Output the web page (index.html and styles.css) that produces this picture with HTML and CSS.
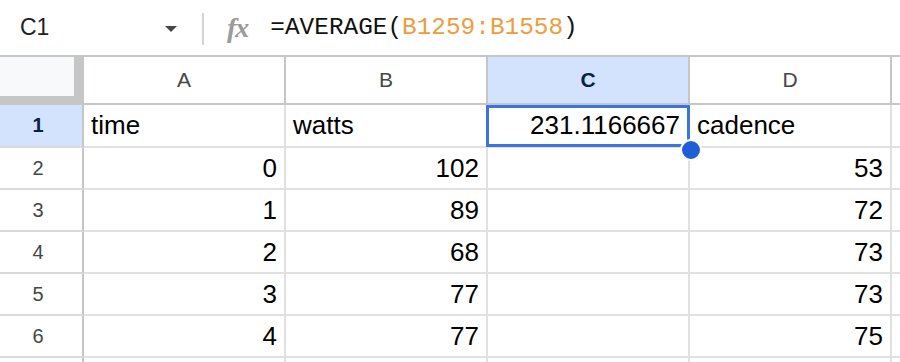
FILE: index.html
```html
<!DOCTYPE html>
<html lang="en">

<head>
    <meta charset="UTF-8">
    <meta name="viewport" content="width=device-width, initial-scale=1.0">
    <title>Sheet</title>

    <link rel="stylesheet" href="styles.css">
</head>

<body>
    <div id="toolbar">
        <span class="namebox">C1</span>
        <span class="drop"></span>
        <span class="divider"></span>
        <span class="fx">fx</span>
        <span class="formula">=AVERAGE(<span class="ref">B1259:B1558</span>)</span>
    </div>

    <div id="sheet">
        <!-- header row -->
        <div class="corner"><div class="corner_inner"></div></div>
        <div class="colhead">A</div>
        <div class="colhead">B</div>
        <div class="colhead active">C</div>
        <div class="colhead">D</div>
        <div class="colhead last"></div>

        <!-- row 1 -->
        <div class="rowhead active r1">1</div>
        <div class="cell r1">time</div>
        <div class="cell r1">watts</div>
        <div class="cell r1 num selected">231.1166667</div>
        <div class="cell r1">cadence</div>
        <div class="cell r1 last"></div>

        <div class="rowhead">2</div>
        <div class="cell num">0</div>
        <div class="cell num">102</div>
        <div class="cell"></div>
        <div class="cell num">53</div>
        <div class="cell last"></div>

        <div class="rowhead">3</div>
        <div class="cell num">1</div>
        <div class="cell num">89</div>
        <div class="cell"></div>
        <div class="cell num">72</div>
        <div class="cell last"></div>

        <div class="rowhead">4</div>
        <div class="cell num">2</div>
        <div class="cell num">68</div>
        <div class="cell"></div>
        <div class="cell num">73</div>
        <div class="cell last"></div>

        <div class="rowhead">5</div>
        <div class="cell num">3</div>
        <div class="cell num">77</div>
        <div class="cell"></div>
        <div class="cell num">73</div>
        <div class="cell last"></div>

        <div class="rowhead">6</div>
        <div class="cell num">4</div>
        <div class="cell num">77</div>
        <div class="cell"></div>
        <div class="cell num">75</div>
        <div class="cell last"></div>

        <div class="rowhead"></div>
        <div class="cell"></div>
        <div class="cell"></div>
        <div class="cell"></div>
        <div class="cell"></div>
        <div class="cell last"></div>
    </div>
</body>

</html>
```

FILE: styles.css
```css
* {
    box-sizing: border-box;
}

body {
    margin: 0;
    height: 362px;
    background: #fff;
    font-family: "Liberation Sans", Arial, sans-serif;
    overflow: hidden;
}

/* ==== formula bar ==== */

#toolbar {
    height: 55px;
    display: flex;
    align-items: center;
}

.namebox {
    width: 165px;
    padding-left: 20px;
    font-size: 23px;
    color: #1f1f1f;
}

.drop {
    width: 0;
    height: 0;
    border-left: 6.5px solid transparent;
    border-right: 6.5px solid transparent;
    border-top: 6px solid #444746;
    margin-top: 3px;
}

.divider {
    width: 2px;
    height: 32px;
    background: #d4d4d4;
    margin-left: 25px;
    margin-top: 3px;
}

.fx {
    margin-left: 23px;
    font-family: "Liberation Serif", serif;
    font-style: italic;
    font-weight: bold;
    font-size: 28px;
    color: #9a9a9a;
    letter-spacing: -1px;
}

.formula {
    margin-left: 22px;
    font-family: "Liberation Mono", monospace;
    font-size: 24.4px;
    color: #111;
}

.ref {
    color: #ee9c3f;
}

/* ==== grid ==== */

#sheet {
    display: grid;
    grid-template-columns: 84px 202px 202px 202px 202px 1fr;
    grid-template-rows: 48px 43px repeat(5, 42px) 10px;
    border-top: 2px solid #c4c7c5;
}

.corner {
    background: #c4c7c5;
}

.corner_inner {
    width: 74px;
    height: 39px;
    background: #f8f9fa;
}

.colhead {
    display: flex;
    align-items: center;
    justify-content: center;
    font-size: 21px;
    color: #444746;
    border-right: 2px solid #c4c7c5;
    border-bottom: 2px solid #c4c7c5;
}

.rowhead {
    display: flex;
    align-items: center;
    justify-content: center;
    padding-right: 6px;
    font-size: 20px;
    color: #444746;
    border-right: 2px solid #c4c7c5;
    border-bottom: 2px solid #dadada;
}

.colhead.active,
.rowhead.active {
    background: #d3e3fd;
    color: #0b1f47;
    font-weight: bold;
}

.cell {
    display: flex;
    align-items: center;
    padding: 0 7px;
    font-size: 26px;
    color: #000;
    white-space: nowrap;
    border-right: 2px solid #e1e1e1;
    border-bottom: 2px solid #e1e1e1;
}

.cell.num {
    justify-content: flex-end;
}

.last {
    border-right: none;
}

.selected {
    position: relative;
    padding-right: 8px;
}

.selected::after {
    content: "";
    position: absolute;
    left: -2px;
    right: -2px;
    top: 0;
    bottom: -1px;
    border: 3px solid #3a74dc;
}

.selected::before {
    content: "";
    position: absolute;
    left: 192px;
    top: 34px;
    width: 18px;
    height: 18px;
    border-radius: 50%;
    background: #1f5ed6;
    border: 2px solid #fff;
    z-index: 2;
}
```
